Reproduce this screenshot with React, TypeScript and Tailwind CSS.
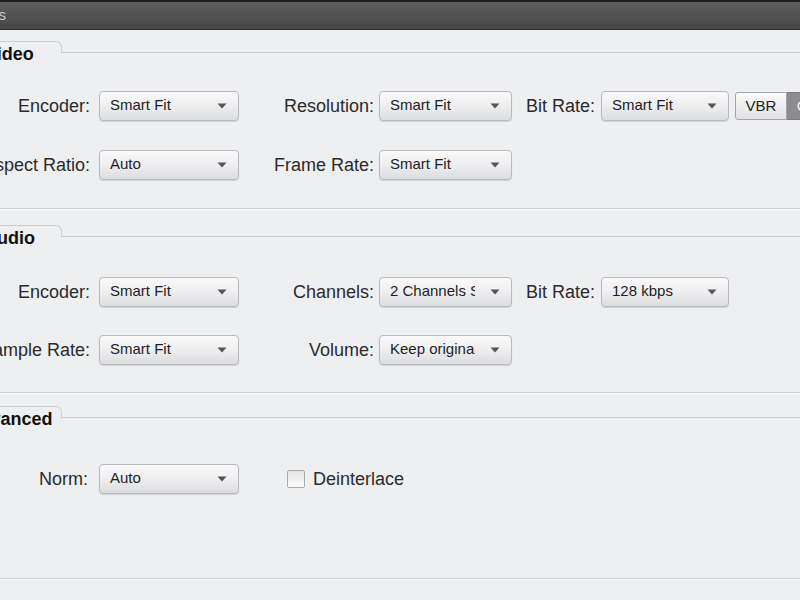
import React from "react";

function Arrow() {
  return (
    <svg width="10" height="6" viewBox="0 0 10 6" className="shrink-0">
      <path d="M0.5 0.5 L9.5 0.5 L5 5.5 Z" fill="#555558" />
    </svg>
  );
}

function Dropdown({ value, w }: { value: string; w: string }) {
  return (
    <div
      className={`${w} h-[30px] shrink-0 flex items-center pl-[10px] pr-[11px] rounded-[4px] border border-[#b9babe] bg-gradient-to-b from-[#fafafb] via-[#eeeef0] to-[#dcdde0] shadow-[0_1px_1px_rgba(0,0,0,0.12)]`}
    >
      <span className="flex-1 overflow-hidden whitespace-nowrap text-[15px] leading-[18px] text-[#1e1e1e] pb-[2px]">
        {value}
      </span>
      <span className="ml-[15px] flex items-center">
        <Arrow />
      </span>
    </div>
  );
}

function Label({ text, w, pr }: { text: string; w: string; pr: string }) {
  return (
    <div className={`${w} ${pr} shrink-0 flex justify-end whitespace-nowrap text-[18px] leading-[22px] text-[#2b2b2b]`}>
      <span>{text}</span>
    </div>
  );
}

function SectionHeader({ title }: { title: string }) {
  return (
    <div className="flex items-start h-[12px]">
      <div className="-ml-[42px] w-[104px] h-[12px] shrink-0 border-t border-r border-[#cbccd0] rounded-tr-[6px] flex justify-center">
        <span className="mt-[2px] whitespace-nowrap text-[18px] leading-[20px] font-bold text-[#111]">
          {title}
        </span>
      </div>
      <div className="flex-1 h-[12px] border-b border-[#cbccd0]" />
    </div>
  );
}

function Separator({ mt }: { mt: string }) {
  return (
    <div className={mt}>
      <div className="h-px bg-[#cfd0d4]" />
      <div className="h-px bg-[#f9f9fa]" />
    </div>
  );
}

export default function App() {
  return (
    <div className="w-[800px] h-[600px] overflow-hidden bg-[#eeeff1] font-['Liberation_Sans',Arial,sans-serif]">
      {/* Title bar */}
      <div className="h-[30px] border-t-2 border-[#1c1c1c] border-b border-b-[#2e2e2e] bg-gradient-to-b from-[#5e5e5e] to-[#464646] flex items-center">
        <div className="w-[6px] flex justify-end whitespace-nowrap">
          <span className="text-[15px] text-[#c8c8c8]">Settings</span>
        </div>
      </div>

      {/* Video */}
      <div className="mt-[11px]">
        <SectionHeader title="Video" />
      </div>
      <div className="mt-[38px] flex items-center h-[30px]">
        <Label text="Encoder:" w="w-[99px]" pr="pr-[9px]" />
        <Dropdown value="Smart Fit" w="w-[140px]" />
        <Label text="Resolution:" w="w-[140px]" pr="pr-[5px]" />
        <Dropdown value="Smart Fit" w="w-[133px]" />
        <Label text="Bit Rate:" w="w-[89px]" pr="pr-[6px]" />
        <Dropdown value="Smart Fit" w="w-[128px]" />
        <div className="ml-[6px] flex h-[28px] shrink-0">
          <div className="w-[52px] flex items-center justify-center rounded-l-[3px] border border-[#a3a4a8] bg-gradient-to-b from-[#fbfbfb] to-[#e2e2e4] text-[15px] text-[#222]">
            VBR
          </div>
          <div className="w-[52px] flex items-center justify-center border border-l-0 border-[#7d7d80] bg-[#8c8c8e] text-[15px] text-[#f0f0f0]">
            CBR
          </div>
        </div>
      </div>
      <div className="mt-[29px] flex items-center h-[30px]">
        <Label text="Aspect Ratio:" w="w-[99px]" pr="pr-[9px]" />
        <Dropdown value="Auto" w="w-[140px]" />
        <Label text="Frame Rate:" w="w-[140px]" pr="pr-[5px]" />
        <Dropdown value="Smart Fit" w="w-[133px]" />
      </div>

      <Separator mt="mt-[28px]" />

      {/* Audio */}
      <div className="mt-[15px]">
        <SectionHeader title="Audio" />
      </div>
      <div className="mt-[40px] flex items-center h-[30px]">
        <Label text="Encoder:" w="w-[99px]" pr="pr-[9px]" />
        <Dropdown value="Smart Fit" w="w-[140px]" />
        <Label text="Channels:" w="w-[140px]" pr="pr-[5px]" />
        <Dropdown value="2 Channels Stereo" w="w-[133px]" />
        <Label text="Bit Rate:" w="w-[89px]" pr="pr-[6px]" />
        <Dropdown value="128 kbps" w="w-[128px]" />
      </div>
      <div className="mt-[28px] flex items-center h-[30px]">
        <Label text="Sample Rate:" w="w-[99px]" pr="pr-[9px]" />
        <Dropdown value="Smart Fit" w="w-[140px]" />
        <Label text="Volume:" w="w-[140px]" pr="pr-[5px]" />
        <Dropdown value="Keep original" w="w-[133px]" />
      </div>

      <Separator mt="mt-[27px]" />

      {/* Advanced */}
      <div className="mt-[12px]">
        <SectionHeader title="Advanced" />
      </div>
      <div className="mt-[46px] flex items-center h-[30px]">
        <Label text="Norm:" w="w-[99px]" pr="pr-[11px]" />
        <Dropdown value="Auto" w="w-[140px]" />
        <div className="ml-[48px] w-[18px] h-[18px] shrink-0 rounded-[2px] border border-[#a9aaae] bg-gradient-to-b from-[#e4e4e6] to-[#fafafa]" />
        <span className="ml-[8px] text-[18px] leading-[22px] text-[#2b2b2b] whitespace-nowrap">Deinterlace</span>
      </div>

      <Separator mt="mt-[84px]" />
    </div>
  );
}
